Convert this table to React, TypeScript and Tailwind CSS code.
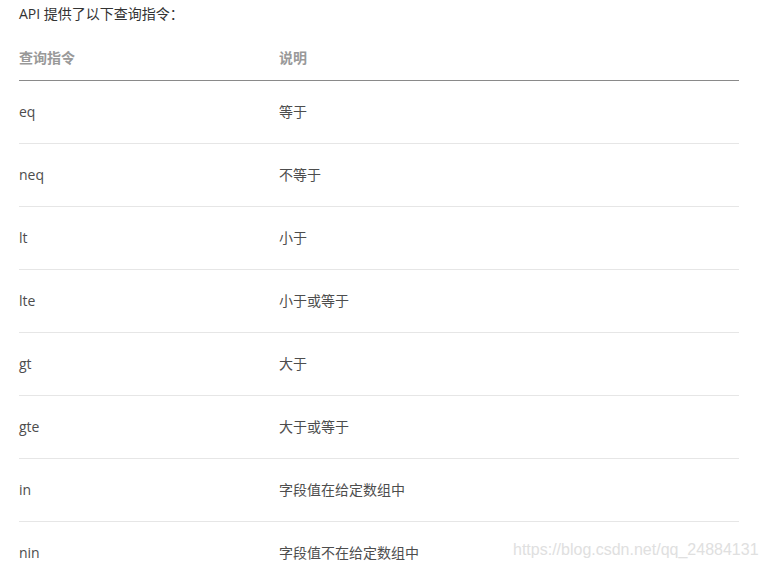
export default function App() {
  const rows: [string, string][] = [
    ["eq", "等于"],
    ["neq", "不等于"],
    ["lt", "小于"],
    ["lte", "小于或等于"],
    ["gt", "大于"],
    ["gte", "大于或等于"],
    ["in", "字段值在给定数组中"],
    ["nin", "字段值不在给定数组中"],
  ];
  const font = { fontFamily: '"Open Sans", "Noto Sans CJK SC", sans-serif' };
  return (
    <div className="relative w-[765px] h-[566px] overflow-hidden bg-white" style={font}>
      <div className="pl-[19px] pr-[26px]">
        <div className="h-[26px] flex items-center text-[14px] text-[#333]">API 提供了以下查询指令：</div>
        <div className="h-[10px]" />
        <div className="flex h-[45px] items-center pb-[2px] border-b border-[#8a8a8a] text-[14px] font-bold text-[#999]">
          <div className="w-[260px]">查询指令</div>
          <div>说明</div>
        </div>
        {rows.map(([a, b]) => (
          <div key={a} className="flex h-[63px] items-center pb-[2px] border-b border-[#e6e6e6] text-[14px] text-[#4d4d4d]">
            <div className="w-[260px]">{a}</div>
            <div>{b}</div>
          </div>
        ))}
      </div>
      <div
        className="absolute left-[513px] top-[538px] text-[16px] text-[#e0e0e0]"
        style={{ fontFamily: '"Liberation Sans", Arial, sans-serif' }}
      >
        https://blog.csdn.net/qq_24884131
      </div>
    </div>
  );
}
